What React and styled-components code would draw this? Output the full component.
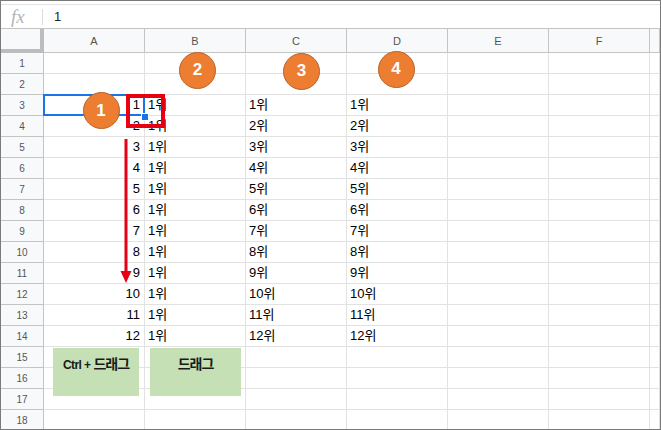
import React from 'react';
import styled, { createGlobalStyle } from 'styled-components';

const GlobalStyle = createGlobalStyle`
  html, body {
    margin: 0;
    padding: 0;
    background: #fff;
  }
`;

const Frame = styled.div`
  position: relative;
  width: 661px;
  height: 430px;
  box-sizing: border-box;
  border: 1px solid #7a7a7a;
  overflow: hidden;
  background: #fff;
  font-family: 'Liberation Sans', 'Noto Sans CJK KR', Arial, sans-serif;
`;

const FormulaBar = styled.div`
  margin-top: 3px;
  height: 25px;
  box-sizing: border-box;
  border-top: 1px solid #e3e3e3;
  border-bottom: 1px solid #c4c4c4;
  display: flex;
  align-items: center;
`;

const Fx = styled.span`
  width: 42px;
  padding-left: 10px;
  box-sizing: border-box;
  font-family: 'Liberation Serif', serif;
  font-style: italic;
  font-size: 19px;
  color: #b4b4b4;
  border-right: 1px solid #dadada;
  line-height: 16px;
  height: 16px;
`;

const FormulaValue = styled.span`
  padding-left: 11px;
  font-size: 13px;
  color: #222;
`;

const Row = styled.div`
  display: flex;
  height: ${({ $h }) => $h}px;
  box-sizing: border-box;
`;

const Corner = styled.div`
  width: 43px;
  height: 24px;
  box-sizing: border-box;
  background: #f8f9fa;
  border-right: 4px solid #bdbdbd;
  border-bottom: 4px solid #bdbdbd;
`;

const ColHead = styled.div`
  width: ${({ $last }) => ($last ? 'auto' : '101px')};
  flex: ${({ $last }) => ($last ? '1' : 'none')};
  box-sizing: border-box;
  background: #f8f9fa;
  border-right: 1px solid #c4c4c4;
  border-bottom: 1px solid #c4c4c4;
  font-size: 11px;
  color: #555;
  display: flex;
  align-items: center;
  justify-content: center;
`;

const RowHead = styled.div`
  width: 43px;
  box-sizing: border-box;
  background: #f8f9fa;
  border-right: 1px solid #c4c4c4;
  border-bottom: 1px solid #c4c4c4;
  font-size: 10px;
  color: #555;
  display: flex;
  align-items: center;
  justify-content: center;
`;

const Cell = styled.div`
  width: ${({ $last }) => ($last ? 'auto' : '101px')};
  flex: ${({ $last }) => ($last ? '1' : 'none')};
  box-sizing: border-box;
  border-right: 1px solid #e2e2e2;
  border-bottom: 1px solid #e2e2e2;
  font-size: 13px;
  color: #000;
  line-height: 20px;
  padding: 0 4px 0 3px;
  text-align: ${({ $align }) => $align || 'left'};
  white-space: nowrap;
  overflow: hidden;
`;

const Selection = styled.div`
  position: absolute;
  left: 42px;
  top: 93px;
  width: 102px;
  height: 22px;
  box-sizing: border-box;
  border: 2px solid #1a73e8;
`;

const Handle = styled.div`
  position: absolute;
  left: 140px;
  top: 112px;
  width: 6px;
  height: 6px;
  background: #1a73e8;
  border: 1px solid #fff;
`;

const RedBox = styled.div`
  position: absolute;
  left: 125px;
  top: 93px;
  width: 39px;
  height: 34px;
  box-sizing: border-box;
  border: 4px solid #e60012;
`;

const Badge = styled.div`
  position: absolute;
  left: ${({ $x }) => $x - 19.5}px;
  top: ${({ $y }) => $y - 19.5}px;
  width: 37px;
  height: 37px;
  box-sizing: border-box;
  border-radius: 50%;
  background: #ed7d31;
  border: 1px solid #b8642b;
  color: #fff;
  font-weight: bold;
  font-size: 17px;
  display: flex;
  align-items: center;
  justify-content: center;
`;

const Arrow = styled.svg`
  position: absolute;
  left: 114px;
  top: 136px;
`;

const Note = styled.div`
  position: absolute;
  left: ${({ $x }) => $x}px;
  top: 347px;
  width: ${({ $w }) => $w}px;
  height: 48px;
  background: #c5e0b4;
  display: flex;
  justify-content: center;
  align-items: baseline;
  padding-top: 5px;
  box-sizing: border-box;
  font-weight: bold;
  color: #1a1a1a;
`;

const Small = styled.span`
  font-size: 12px;
  letter-spacing: -0.6px;
  margin-right: 3px;
`;

const Big = styled.span`
  font-size: 14px;
  letter-spacing: -1px;
  font-family: 'Noto Sans CJK KR', sans-serif;
`;

const cols = ['A', 'B', 'C', 'D', 'E', 'F'];

const rowData = (n) => {
  if (n < 3 || n > 14) return ['', '', '', ''];
  const k = n - 2;
  return [String(k), '1위', `${k}위`, `${k}위`];
};

const App = () => {
  const rows = Array.from({ length: 18 }, (_, i) => i + 1);
  return (
    <Frame>
      <GlobalStyle />
      <FormulaBar>
        <Fx>fx</Fx>
        <FormulaValue>1</FormulaValue>
      </FormulaBar>
      <Row $h={24}>
        <Corner />
        {cols.map((c) => (
          <ColHead key={c}>{c}</ColHead>
        ))}
        <ColHead $last />
      </Row>
      {rows.map((n) => {
        const [a, b, c, d] = rowData(n);
        return (
          <Row key={n} $h={21}>
            <RowHead>{n}</RowHead>
            <Cell $align="right">{a}</Cell>
            <Cell>{b}</Cell>
            <Cell>{c}</Cell>
            <Cell>{d}</Cell>
            <Cell />
            <Cell />
            <Cell $last />
          </Row>
        );
      })}

      <Selection />
      <Handle />
      <RedBox />
      <Arrow width="22" height="150" viewBox="0 0 22 150">
        <line x1="11" y1="2" x2="11" y2="136" stroke="#e60012" strokeWidth="3" />
        <polygon points="5.5,134 16.5,134 11,146" fill="#e60012" />
      </Arrow>

      <Badge $x={101} $y={110.5}>1</Badge>
      <Badge $x={197.5} $y={70}>2</Badge>
      <Badge $x={301.5} $y={71}>3</Badge>
      <Badge $x={396} $y={69}>4</Badge>

      <Note $x={52} $w={86}>
        <Small>Ctrl +</Small>
        <Big>드래그</Big>
      </Note>
      <Note $x={149} $w={91}>
        <Big>드래그</Big>
      </Note>
    </Frame>
  );
};

export default App;
